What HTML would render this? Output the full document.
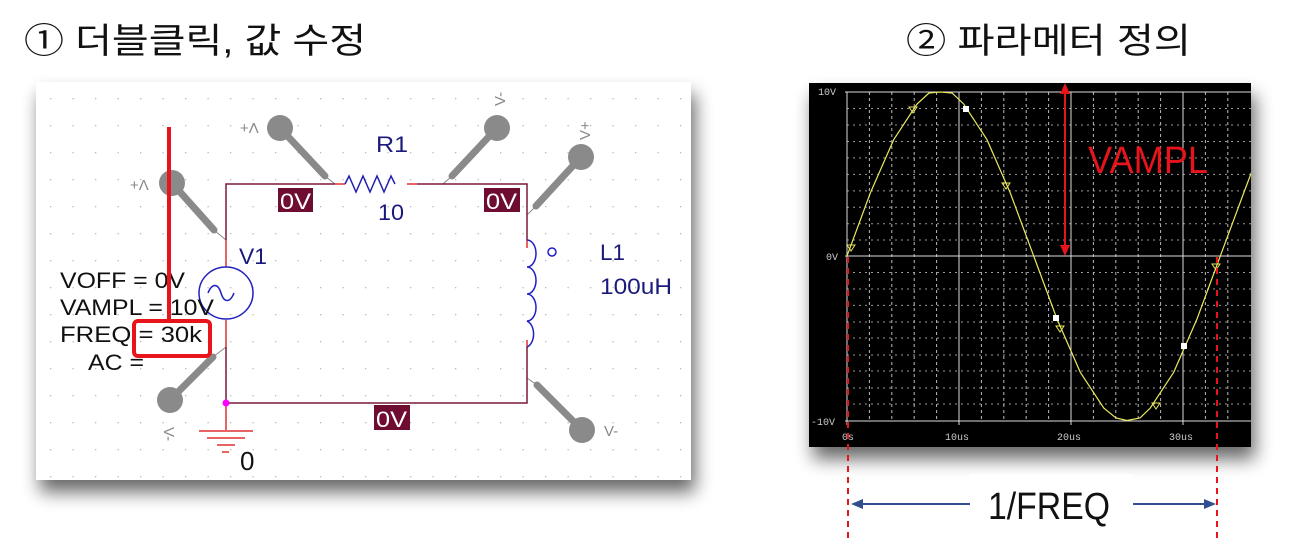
<!DOCTYPE html>
<html><head><meta charset="utf-8"><style>
html,body{margin:0;padding:0;background:#fff;width:1316px;height:550px;overflow:hidden}
svg{display:block}
.k{font-family:"Liberation Sans","Noto Sans CJK KR",sans-serif}
</style></head><body>
<svg width="1316" height="550" xmlns="http://www.w3.org/2000/svg">
<defs>
<filter id="sh" x="-10%" y="-10%" width="125%" height="135%"><feGaussianBlur in="SourceAlpha" stdDeviation="9"/><feOffset dx="4" dy="12"/><feComponentTransfer><feFuncA type="linear" slope="0.6"/></feComponentTransfer><feMerge><feMergeNode/><feMergeNode in="SourceGraphic"/></feMerge></filter>
<pattern id="dots" width="22.5" height="27" patternUnits="userSpaceOnUse" x="50" y="98"><rect x="0" y="0" width="1.3" height="1.3" fill="#b8b8b8"/></pattern>
<clipPath id="pc"><rect x="809" y="83" width="442" height="364"/></clipPath>
</defs>
<text x="24" y="53" class="k" font-size="35" fill="#111" textLength="342" lengthAdjust="spacingAndGlyphs">① 더블클릭, 값 수정</text>
<text x="906" y="53" class="k" font-size="35" fill="#111" textLength="285" lengthAdjust="spacingAndGlyphs">② 파라메터 정의</text>

<!-- left panel -->
<rect x="36" y="82" width="655" height="398" fill="#fff" filter="url(#sh)"/>
<rect x="36" y="82" width="655" height="398" fill="url(#dots)"/>
<g stroke-linecap="round">
<g stroke="#8a8a8a" stroke-width="7" fill="#8a8a8a">
<line x1="280" y1="128" x2="325" y2="176"/><circle cx="280" cy="128" r="13" stroke="none"/>
<line x1="497" y1="128" x2="452" y2="176"/><circle cx="497" cy="128" r="13" stroke="none"/>
<line x1="172" y1="183" x2="214" y2="230"/><circle cx="172" cy="183" r="13" stroke="none"/>
<line x1="581" y1="157" x2="536" y2="206"/><circle cx="581" cy="157" r="13" stroke="none"/>
<line x1="170" y1="400" x2="213" y2="357"/><circle cx="170" cy="400" r="13" stroke="none"/>
<line x1="582" y1="430" x2="537" y2="385"/><circle cx="582" cy="430" r="13" stroke="none"/>
</g>
<g stroke="#888" stroke-width="1">
<line x1="325" y1="176" x2="335" y2="184"/><line x1="452" y1="176" x2="443" y2="184"/>
<line x1="214" y1="230" x2="226" y2="240"/><line x1="536" y1="206" x2="527" y2="215"/>
<line x1="213" y1="357" x2="226" y2="347"/><line x1="537" y1="385" x2="527" y2="378"/>
</g>
</g>
<g fill="none" stroke-width="1.5">
<path d="M226 240 V184 H335 M417 184 H527 V240 M527 347 V403 H226 V347" stroke="#7a1a3a"/>
<path d="M335 184 H345 M407 184 H417 M226 240 V267 M226 320 V347 M527 240 V248 M527 340 V347" stroke="#e03030"/>
<path d="M345 184 l4 -8 l7 16 l7 -16 l7 16 l7 -16 l7 16 l7 -16 l4 8" stroke="#2020b0"/>
<ellipse cx="226" cy="293" rx="27" ry="26" stroke="#2020c0"/>
<path d="M208 293 c4 -10 10 -10 13 0 s9 10 13 0" stroke="#2020c0"/>
<path d="M527 240 a9 13.5 0 0 1 0 27 a9 13.5 0 0 1 0 27 a9 13.5 0 0 1 0 27 a9 13.5 0 0 1 0 26" stroke="#2020c0"/>
<circle cx="552" cy="252" r="4" stroke="#2020c0"/>
<path d="M226 403 V430 M199 431 H253 M207 438 H245 M217 445 H235 M222 452 H229" stroke="#e03030"/>
</g>
<circle cx="226" cy="403" r="3.5" fill="#ff00ff"/>
<g class="k" font-size="22">
<rect x="278" y="188" width="35" height="24" fill="#6e0c32"/><text x="280" y="209" fill="#fff" textLength="31" lengthAdjust="spacingAndGlyphs">0V</text>
<rect x="484" y="188" width="36" height="24" fill="#6e0c32"/><text x="486" y="209" fill="#fff" textLength="31" lengthAdjust="spacingAndGlyphs">0V</text>
<rect x="374" y="405" width="36" height="25" fill="#6e0c32"/><text x="376" y="427" fill="#fff" textLength="31" lengthAdjust="spacingAndGlyphs">0V</text>
<text x="376" y="152" fill="#1a1a7a" textLength="32" lengthAdjust="spacingAndGlyphs">R1</text>
<text x="378" y="220" fill="#1a1a7a" textLength="26" lengthAdjust="spacingAndGlyphs">10</text>
<text x="239" y="264" fill="#1a1a7a" textLength="28" lengthAdjust="spacingAndGlyphs">V1</text>
<text x="600" y="260" fill="#1a1a7a" textLength="25" lengthAdjust="spacingAndGlyphs">L1</text>
<text x="600" y="294" fill="#1a1a7a" textLength="72" lengthAdjust="spacingAndGlyphs">100uH</text>
<text x="60" y="288" fill="#111" textLength="125" lengthAdjust="spacingAndGlyphs">VOFF = 0V</text>
<text x="60" y="315" fill="#111" textLength="154" lengthAdjust="spacingAndGlyphs">VAMPL = 10V</text>
<text x="60" y="342" fill="#111" textLength="142" lengthAdjust="spacingAndGlyphs">FREQ = 30k</text>
<text x="88" y="370" fill="#111" textLength="56" lengthAdjust="spacingAndGlyphs">AC =</text>
<text x="240" y="470" fill="#111" font-size="26">0</text>
</g>
<g class="k" font-size="15" fill="#888">
<text x="240" y="133">+Λ</text><text x="130" y="190">+Λ</text><text x="604" y="436">V-</text>
<text transform="translate(505,106) rotate(-90)">V-</text>
<text transform="translate(590,140) rotate(-90)">V+</text>
<text transform="translate(164,427) rotate(90)">V-</text>
</g>
<line x1="169" y1="127" x2="169" y2="320" stroke="#e8141c" stroke-width="4"/>
<rect x="134" y="321" width="76" height="35" rx="4" fill="none" stroke="#e8141c" stroke-width="4"/>

<!-- right panel -->
<rect x="809" y="83" width="442" height="364" fill="#000" filter="url(#sh)"/>
<g clip-path="url(#pc)">
<g stroke="#bbb" stroke-width="1" stroke-dasharray="3,3">
<path d="M847 108.5H1251M847 125H1251M847 141.5H1251M847 157.9H1251M847 174.4H1251M847 190.9H1251M847 207.3H1251M847 223.8H1251M847 240H1251M847 272.5H1251M847 289H1251M847 305.4H1251M847 322H1251M847 338H1251M847 355H1251M847 371H1251M847 388H1251M847 404H1251" stroke-dasharray="2,4" stroke="#999"/>
<path d="M869.4 92V421M891.8 92V421M914.2 92V421M936.6 92V421M981.4 92V421M1003.8 92V421M1026.2 92V421M1048.6 92V421M1093.4 92V421M1115.8 92V421M1138.2 92V421M1160.6 92V421M1205.4 92V421M1227.8 92V421"/>
</g>
<g stroke="#ddd" stroke-width="1">
<path d="M845 92H1251M845 256H1251M845 421H1251M847 92V425M959 92V425M1071 92V425M1183 92V425"/>
</g>
<polyline fill="none" stroke="#e8e860" stroke-width="1.2" points="847,256 870.3,193 893.7,139.7 917,104 929,93 940.3,92 952,93 963.7,104 987,139.7 1010.3,193 1033.7,256 1057,319 1080.3,372.3 1103.7,408 1116,418 1127,420.5 1140,418 1150.3,408 1173.7,372.3 1197,319 1220.3,256 1243.7,193 1255,163"/>
<g fill="#fff"><rect x="963" y="106" width="6" height="6"/><rect x="1053" y="315" width="6" height="6"/><rect x="1181" y="343" width="6" height="6"/></g>
<g fill="none" stroke="#e8e860" stroke-width="1"><path d="M909 107h8l-4 6z M847 245h8l-4 6z M1002 183h8l-4 6z M1056 326h8l-4 6z M1152 403h8l-4 6z M1212 264h8l-4 6z"/></g>
<g font-family="Liberation Mono,monospace" font-size="10" fill="#ccc">
<text x="818" y="95">10V</text><text x="826" y="260">0V</text><text x="811" y="425">-10V</text>
<text x="842" y="440">0s</text><text x="945" y="440">10us</text><text x="1057" y="440">20us</text><text x="1169" y="440">30us</text>
</g>
</g>
<line x1="1065" y1="92" x2="1065" y2="248" stroke="#e8141c" stroke-width="2"/>
<path d="M1065 83 l-5 11 h10z M1065 256 l-5 -11 h10z" fill="#e8141c"/>
<text x="1088" y="173" class="k" font-size="38" fill="#e8141c" textLength="120" lengthAdjust="spacingAndGlyphs">VAMPL</text>
<g stroke="#e8141c" stroke-width="2" stroke-dasharray="6,5">
<line x1="848" y1="257" x2="848" y2="540"/><line x1="1217" y1="257" x2="1217" y2="540"/>
</g>
<line x1="860" y1="504" x2="1208" y2="504" stroke="#2f4f8f" stroke-width="2"/>
<path d="M851 504 l12 -5 v10z M1216 504 l-12 -5 v10z" fill="#2f4f8f"/>
<rect x="970" y="474" width="163" height="56" fill="#fff"/>
<text x="1049" y="519" text-anchor="middle" class="k" font-size="38" fill="#111" textLength="122" lengthAdjust="spacingAndGlyphs">1/FREQ</text>
</svg>
</body></html>
